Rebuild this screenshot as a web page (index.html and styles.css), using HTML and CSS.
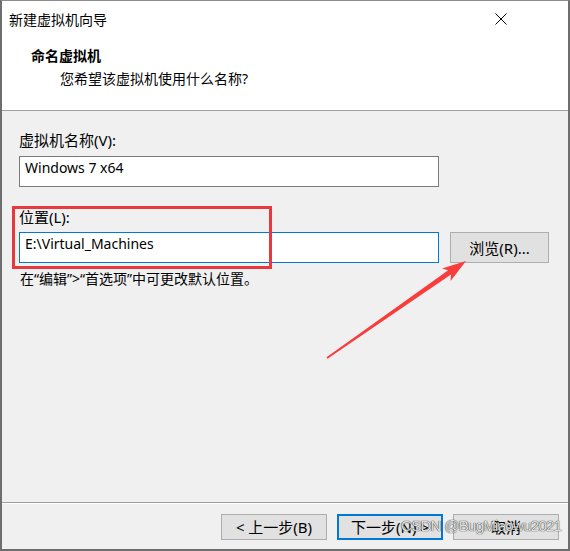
FILE: index.html
```html
<!DOCTYPE html>
<html>
    <head>
        <meta charset="utf-8">
        <meta name="viewport" content="width=device-width, initial-scale=1.0">
        <title>新建虚拟机向导</title>

        <link rel="stylesheet" href="styles.css">
    </head>
    <body>
        <div id="wizard" class="window">
            <div class="titlebar">
                <span>新建虚拟机向导</span>
                <svg class="titlebar--close" width="12" height="12" viewBox="0 0 12 12">
                    <path d="M0.5 0.5 L11.5 11.5 M11.5 0.5 L0.5 11.5" stroke="#000" stroke-width="1"/>
                </svg>
            </div>
            <div class="header">
                <h1>命名虚拟机</h1>
                <p>您希望该虚拟机使用什么名称?</p>
            </div>
            <form id="content--name" class="content">
                <label for="vm-name">虚拟机名称(V):</label>
                <input id="vm-name" class="field" type="text" value="Windows 7 x64" autocomplete="off">
                <label for="vm-path" class="label--location">位置(L):</label>
                <div class="row">
                    <input id="vm-path" class="field field--focus" type="text" value="E:\Virtual_Machines" autocomplete="off">
                    <button type="button" class="btn btn--browse">浏览(R)...</button>
                </div>
                <p class="hint">在“编辑”&gt;“首选项”中可更改默认位置。</p>
            </form>
            <div class="footer">
                <button type="button" class="btn">&lt; 上一步(B)</button>
                <button type="button" class="btn btn--default">下一步(N) &gt;</button>
                <button type="button" class="btn">取消</button>
            </div>

            <!-- annotations drawn on top of the screenshot -->
            <div class="mark-box"></div>
            <svg class="mark-arrow" width="570" height="551" viewBox="0 0 570 551">
                <polygon points="327.5,358.7 451,274.5 450.6,280.9 466,261 442,268.5 448.2,270.3 326.5,357.3" fill="#f93c3c"/>
            </svg>
            <div class="watermark">CSDN @BugMiaowu2021</div>
        </div>
    </body>
</html>
```

FILE: styles.css
```css
:root {
    --panel: #f0f0f0;
    --line: #a0a0a0;
    --frame: #6e6e6e;
    --blue: #0078d7;
    --btn: #e1e1e1;
    --btn-border: #adadad;
    --mark: #e8393f;
}

body {
    margin: 0;
    background-color: var(--panel);
    color: #000;
    font-family: "Noto Sans", "Noto Sans CJK SC", sans-serif;
    font-size: 15px;
    overflow: hidden;
}

.window {
    position: relative;
    width: 570px;
    height: 551px;
    box-sizing: border-box;
    border: 2px solid var(--frame);
    border-top: 1px solid #8c8c8c;
    display: flex;
    flex-direction: column;
    background-color: var(--panel);
}

.titlebar {
    height: 38px;
    flex: none;
    display: flex;
    align-items: center;
    justify-content: space-between;
    padding: 0 61px 0 7px;
    background-color: #fff;
    font-size: 14px;
    line-height: 20px;
}

.titlebar--close {
    display: block;
    margin-top: -2px;
}

.header {
    height: 72px;
    flex: none;
    box-sizing: border-box;
    padding: 7px 0 0 29px;
    background-color: #fff;
    border-bottom: 1px solid var(--line);
    font-size: 14px;
}

.header h1 {
    margin: 0;
    font-size: 14px;
    font-weight: 700;
    line-height: 20px;
}

.header p {
    margin: 3px 0 0 29px;
    line-height: 20px;
}

.content {
    flex: 1;
    padding: 19px 0 0 17px;
}

.content label {
    display: block;
    line-height: 20px;
}

.field {
    display: block;
    width: 420px;
    height: 31px;
    box-sizing: border-box;
    margin: 6px 0 0;
    padding: 0 5px 9px;
    border: 1px solid #7a7a7a;
    border-radius: 0;
    background-color: #fff;
    color: #000;
    font-family: "Noto Sans", "Noto Sans CJK SC", sans-serif;
    font-size: 14px;
    outline: none;
}

.field--focus {
    margin: 0;
    border-color: var(--blue);
}

.label--location {
    margin-top: 20px;
}

.row {
    display: flex;
    gap: 11px;
    margin-top: 5px;
}

.hint {
    margin: 6px 0 0 1px;
    font-size: 14px;
    line-height: 20px;
}

.btn {
    width: 106px;
    height: 26px;
    box-sizing: border-box;
    padding: 0;
    border: 1px solid var(--btn-border);
    border-radius: 0;
    background-color: var(--btn);
    color: #000;
    font-family: "Noto Sans", "Noto Sans CJK SC", sans-serif;
    font-size: 15px;
    line-height: 20px;
}

.btn--browse {
    width: 99px;
    height: 31px;
}

.btn--default {
    border: 2px solid var(--blue);
}

.footer {
    height: 47px;
    flex: none;
    box-sizing: border-box;
    display: flex;
    justify-content: flex-end;
    gap: 10px;
    padding: 11px 9px 0 0;
    border-top: 1px solid var(--line);
    box-shadow: inset 0 1px 0 #fff;
}

.mark-box {
    position: absolute;
    left: 10px;
    top: 205px;
    width: 260px;
    height: 63px;
    box-sizing: border-box;
    border: 3px solid var(--mark);
}

.mark-arrow {
    position: absolute;
    left: -2px;
    top: -1px;
    pointer-events: none;
}

.watermark {
    position: absolute;
    left: 399px;
    top: 516px;
    font-family: "Liberation Sans", sans-serif;
    font-size: 15px;
    letter-spacing: -0.7px;
    line-height: 17px;
    color: rgba(255, 255, 255, 0.9);
    text-shadow: 0 0 1px rgba(0, 0, 0, 0.9), 0 0 1px rgba(0, 0, 0, 0.6);
    white-space: nowrap;
    pointer-events: none;
}
```
